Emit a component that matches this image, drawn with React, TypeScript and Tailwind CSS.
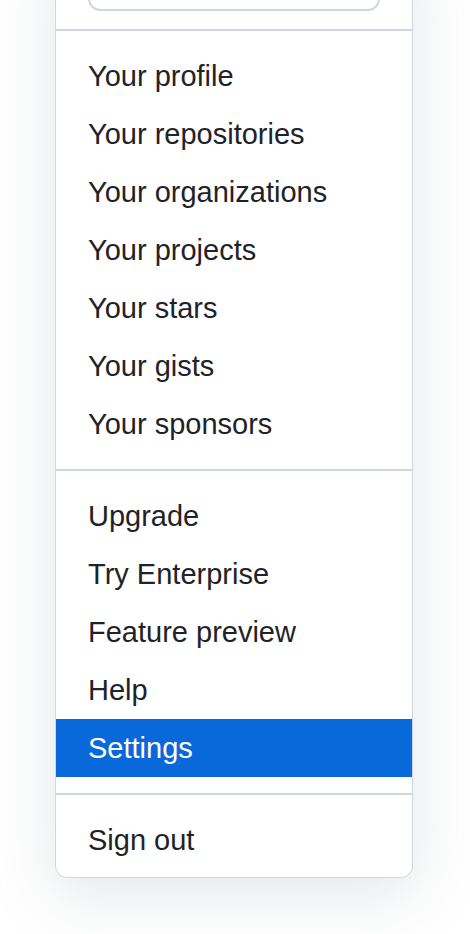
const groups: string[][] = [
  [
    "Your profile",
    "Your repositories",
    "Your organizations",
    "Your projects",
    "Your stars",
    "Your gists",
    "Your sponsors",
  ],
  ["Upgrade", "Try Enterprise", "Feature preview", "Help", "Settings"],
  ["Sign out"],
];

const active = "Settings";

function MenuItem({ label }: { label: string }) {
  const isActive = label === active;
  return (
    <a
      href="#"
      className={
        isActive
          ? "flex h-[58px] items-center bg-[#0969da] px-8 pt-[2px] text-white"
          : "flex h-[58px] items-center px-8 pt-[2px] text-[#1f2328]"
      }
    >
      {label}
    </a>
  );
}

export default function App() {
  return (
    <div className="flex min-h-screen flex-col overflow-hidden bg-white pl-[55px] font-['Liberation_Sans',Arial,sans-serif] text-[29px]">
      <div className="-mt-[60px] w-[358px] overflow-hidden rounded-b-[12px] border border-[#d0d7de] bg-white shadow-[0_16px_64px_rgba(140,149,159,0.24)]">
        {/* status input, mostly scrolled out of view */}
        <div className="px-8 pb-[18px] pt-4">
          <div className="h-[54px] rounded-[12px] border-2 border-[#d0d7de]" />
        </div>
        {groups.map((items, i) => (
          <div
            key={i}
            className={
              i === groups.length - 1
                ? "border-t-2 border-[#d0d7de] pb-2 pt-4"
                : "border-t-2 border-[#d0d7de] py-4"
            }
          >
            {items.map((label) => (
              <MenuItem key={label} label={label} />
            ))}
          </div>
        ))}
      </div>
    </div>
  );
}
